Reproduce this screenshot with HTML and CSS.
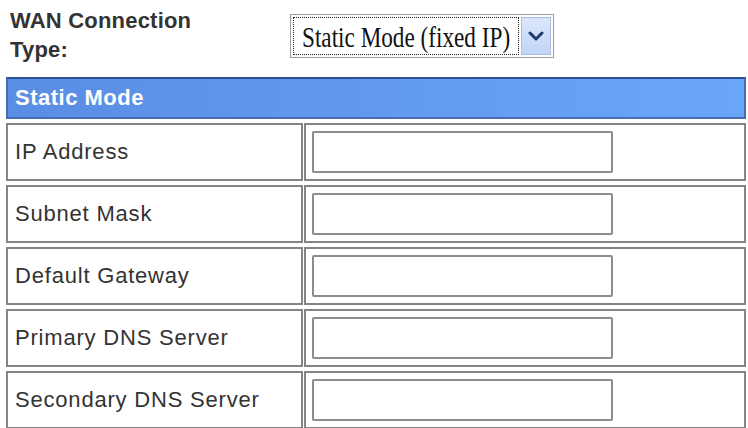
FILE: index.html
```html
<!DOCTYPE html>
<html>
<head>
<meta charset="utf-8">
<link rel="stylesheet" href="styles.css">
</head>
<body>
<div class="top">
  <div class="wan-label">WAN Connection<br>Type:</div>
  <div class="select">
    <span class="select-value"><span class="select-text">Static Mode (fixed IP)</span></span>
    <span class="select-btn">
      <svg width="16" height="10" viewBox="0 0 16 10"><path d="M2 2 L8 8 L14 2" fill="none" stroke="#1d3a72" stroke-width="3" stroke-linecap="round" stroke-linejoin="round"/></svg>
    </span>
  </div>
</div>
<div class="grid">
  <div class="head">Static Mode</div>
  <div class="cell label">IP Address</div>
  <div class="cell field"><input class="text-input" type="text"></div>
  <div class="cell label">Subnet Mask</div>
  <div class="cell field"><input class="text-input" type="text"></div>
  <div class="cell label">Default Gateway</div>
  <div class="cell field"><input class="text-input" type="text"></div>
  <div class="cell label">Primary DNS Server</div>
  <div class="cell field"><input class="text-input" type="text"></div>
  <div class="cell label">Secondary DNS Server</div>
  <div class="cell field"><input class="text-input" type="text"></div>
</div>
</body>
</html>
```
FILE: styles.css
```css
html, body {
  margin: 0;
  padding: 0;
  background: #ffffff;
  overflow: hidden;
}
body {
  font-family: "Liberation Sans", Arial, sans-serif;
  color: #333;
}
.top {
  display: flex;
  align-items: flex-start;
  padding: 6px 0 0 10px;
  height: 58px;
}
.wan-label {
  width: 280px;
  font-weight: bold;
  font-size: 22px;
  line-height: 29px;
  letter-spacing: 0.2px;
  color: #333;
}
.select {
  margin-top: 8px;
  width: 264px;
  height: 44px;
  box-sizing: border-box;
  border: 1px solid #9c9c9c;
  padding: 2px;
  display: flex;
  gap: 2px;
  background: #fff;
}
.select-value {
  flex: 1;
  border: 1px dotted #222;
  display: flex;
  align-items: center;
  padding: 3px 0 0 8px;
  overflow: hidden;
  white-space: nowrap;
}
.select-text {
  display: inline-block;
  font-family: "Liberation Serif", "Times New Roman", serif;
  font-size: 29px;
  color: #111;
  transform: scaleX(0.8);
  transform-origin: left center;
}
.select-btn {
  width: 30px;
  box-sizing: border-box;
  border: 1px solid #a9bde3;
  background: linear-gradient(#dbe7fb, #c2d5f5);
  display: flex;
  align-items: center;
  justify-content: center;
}
.grid {
  margin: 13px 0 0 6px;
  display: grid;
  grid-template-columns: 297px 442px;
  column-gap: 1px;
  row-gap: 4px;
}
.head {
  grid-column: 1 / 3;
  height: 42px;
  box-sizing: border-box;
  border: 2px solid #4a6db0;
  border-top-color: #2f4f8f;
  background: linear-gradient(90deg, #5a8de4, #6aa6f8);
  color: #fff;
  font-weight: bold;
  font-size: 22px;
  letter-spacing: 0.5px;
  display: flex;
  align-items: center;
  padding-left: 7px;
}
.cell {
  height: 58px;
  box-sizing: border-box;
  border: 2px solid #858585;
  display: flex;
  align-items: center;
}
.label {
  padding-left: 7px;
  font-size: 22px;
  letter-spacing: 0.8px;
  color: #333;
}
.field {
  padding-left: 6px;
}
.text-input {
  width: 301px;
  height: 42px;
  box-sizing: border-box;
  margin: 0;
  border: 2px solid #8c8c8c;
  border-radius: 2px;
  background: #fff;
  outline: none;
  padding: 0;
}
```
